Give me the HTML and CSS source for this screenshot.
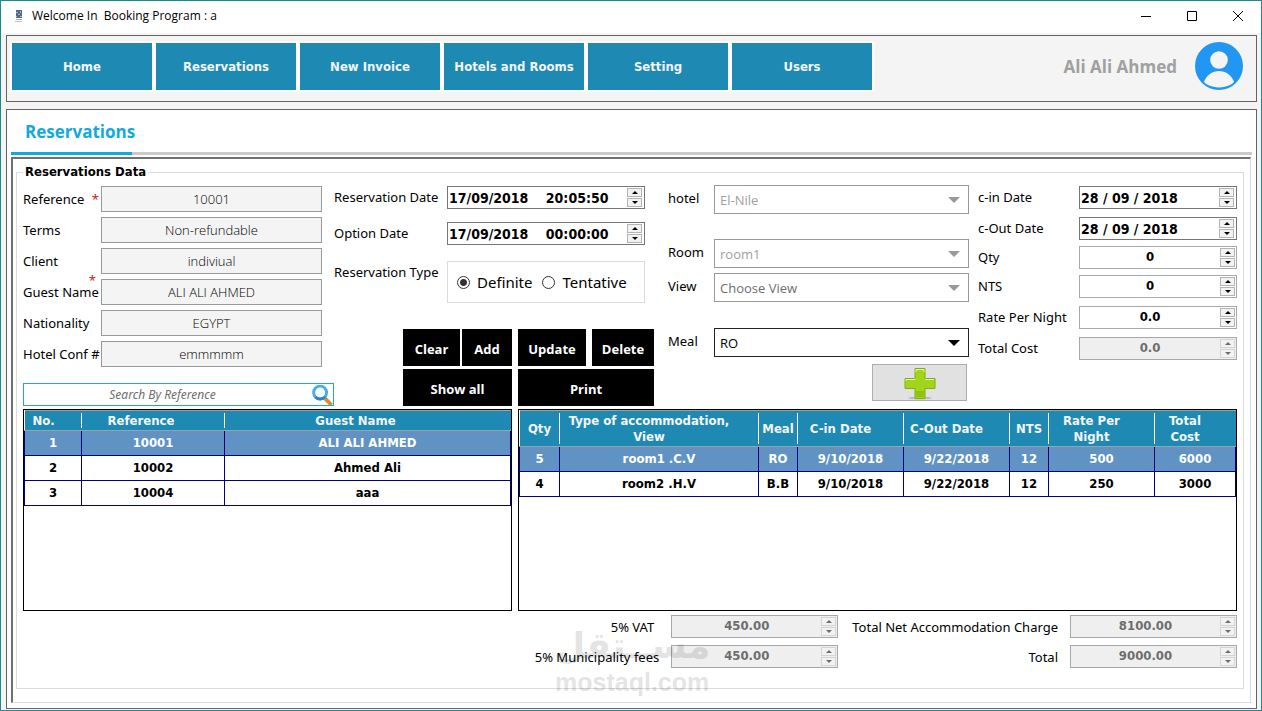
FILE: index.html
```html
<!DOCTYPE html>
<html lang="en">
<head>
<meta charset="utf-8">
<title>Welcome In Booking Program : a</title>
<link rel="stylesheet" href="styles.css">
</head>
<body>
<div class="window">
  <header class="titlebar">
    <svg class="app-icon" viewBox="0 0 8 14" aria-hidden="true"><path d="M1 1h6v8H1z" fill="#56668c"/><path d="M1 3h2v1H1zM5 2h1v2H5zM3 5h2v1H3zM1 7h1v1H1zM5 7h2v1H5z" fill="#aab4cc"/><path d="M1 10h6v1H1z" fill="#aaa"/><path d="M0 12h7v1H0z" fill="#cbb"/></svg>
    <span class="title">Welcome In&nbsp; Booking Program : a</span>
    <div class="window-controls">
      <button type="button" aria-label="Minimize"><svg viewBox="0 0 12 12"><path d="M1 6.500h10"/></svg></button>
      <button type="button" aria-label="Maximize"><svg viewBox="0 0 12 12"><path d="M1.500 1.500h9v9h-9z"/></svg></button>
      <button type="button" aria-label="Close"><svg viewBox="0 0 12 12"><path d="M1 1l10 10M11 1L1 11"/></svg></button>
    </div>
  </header>

  <div class="topbar">
    <nav class="nav">
      <button type="button">Home</button>
      <button type="button">Reservations</button>
      <button type="button">New Invoice</button>
      <button type="button">Hotels and Rooms</button>
      <button type="button">Setting</button>
      <button type="button">Users</button>
    </nav>
    <div class="user">
      <span>Ali Ali Ahmed</span>
      <svg viewBox="0 0 48 48" aria-hidden="true"><circle cx="24" cy="24" r="24" fill="#2196f3"/><circle cx="24" cy="18" r="8.800" fill="#f4f4f4"/><path d="M9 39.500C12 33 17.500 29 24 29s12 4 15 10.500c0 2-7 5.900-15 5.900S9 41.500 9 39.500z" fill="#f4f4f4"/></svg>
    </div>
  </div>

  <main class="page">
    <div class="tabs"><h1>Reservations</h1></div>
    <div class="sheet">
      <fieldset class="data">
        <legend>Reservations Data</legend>

        <div class="form">
          <div class="guest">
            <div class="field"><label for="ref">Reference<span class="star">*</span></label><input id="ref" value="10001" readonly></div>
            <div class="field"><label for="terms">Terms</label><input id="terms" value="Non-refundable" readonly></div>
            <div class="field"><label for="client">Client</label><input id="client" value="indiviual" readonly></div>
            <div class="field"><label for="guest">Guest Name<span class="star raised">*</span></label><input id="guest" value="ALI ALI AHMED" readonly></div>
            <div class="field"><label for="nat">Nationality</label><input id="nat" value="EGYPT" readonly></div>
            <div class="field"><label for="conf">Hotel Conf #</label><input id="conf" value="emmmmm" readonly></div>
            <div class="search">
              <input placeholder="Search By Reference" aria-label="Search By Reference">
              <svg viewBox="0 0 22 22" aria-hidden="true"><path d="M14 15l7 7" stroke="#dc8a2c" stroke-width="4"/><circle cx="9" cy="9" r="6.800" fill="#f4f9fd" stroke="#43aee8" stroke-width="3"/><path d="M4 13.500a6.800 6.800 0 0 0 10 0" fill="none" stroke="#2f7fcb" stroke-width="3"/></svg>
            </div>
          </div>

          <div class="booking">
            <div class="date-row"><label for="rdate">Reservation Date</label><div class="spin dark"><input id="rdate" value="17/09/2018    20:05:50"><span class="arrows"><button type="button" aria-label="Up"></button><button type="button" aria-label="Down"></button></span></div></div>
            <div class="date-row"><label for="odate">Option Date</label><div class="spin dark"><input id="odate" value="17/09/2018    00:00:00"><span class="arrows"><button type="button" aria-label="Up"></button><button type="button" aria-label="Down"></button></span></div></div>
            <div class="type-row">
              <span id="rtype">Reservation Type</span>
              <div class="radios" role="radiogroup" aria-labelledby="rtype">
                <label><input type="radio" name="rtype" checked>Definite</label>
                <label><input type="radio" name="rtype">Tentative</label>
              </div>
            </div>
            <div class="actions">
              <div class="pair edit">
                <button type="button">Clear</button><button type="button">Add</button>
                <button type="button" class="wide">Show all</button>
              </div>
              <div class="pair save">
                <button type="button">Update</button><button type="button">Delete</button>
                <button type="button" class="wide">Print</button>
              </div>
            </div>
          </div>

          <div class="stay">
            <div class="pick hotel"><label for="hotel">hotel</label><div class="combo"><select id="hotel" disabled><option>El-Nile</option></select></div></div>
            <div class="pick"><label for="room">Room</label><div class="combo"><select id="room" disabled><option>room1</option></select></div></div>
            <div class="pick view"><label for="view">View</label><div class="combo muted"><select id="view"><option>Choose View</option></select></div></div>
            <div class="pick"><label for="meal">Meal</label><div class="combo active"><select id="meal"><option>RO</option></select></div></div>
            <button type="button" class="plus" aria-label="Add room"><svg viewBox="0 0 34 34"><ellipse cx="17" cy="32" rx="12" ry="1.500" fill="#b9b9b9"/><path d="M12 2.500h10v10h10v10H22v10H12v-10H2v-10h10z" fill="#a2d41c" stroke="#7fb010"/><path d="M13 6V3.500h8V6M3 15v-1.500h9.500M22 13.500h9" fill="none" stroke="#e6f8a8"/><path d="M13 25h8v6h-8z" fill="#8fc216"/></svg></button>
          </div>

          <div class="rates">
            <div class="rate"><label for="cin">c-in Date</label><div class="spin dark"><input id="cin" value="28 / 09 / 2018"><span class="arrows"><button type="button" aria-label="Up"></button><button type="button" aria-label="Down"></button></span></div></div>
            <div class="rate"><label for="cout">c-Out Date</label><div class="spin dark"><input id="cout" value="28 / 09 / 2018"><span class="arrows"><button type="button" aria-label="Up"></button><button type="button" aria-label="Down"></button></span></div></div>
            <div class="rate"><label for="qty">Qty</label><div class="spin num"><input id="qty" value="0"><span class="arrows"><button type="button" aria-label="Up"></button><button type="button" aria-label="Down"></button></span></div></div>
            <div class="rate"><label for="nts">NTS</label><div class="spin num"><input id="nts" value="0"><span class="arrows"><button type="button" aria-label="Up"></button><button type="button" aria-label="Down"></button></span></div></div>
            <div class="rate"><label for="rpn">Rate Per Night</label><div class="spin num"><input id="rpn" value="0.0"><span class="arrows"><button type="button" aria-label="Up"></button><button type="button" aria-label="Down"></button></span></div></div>
            <div class="rate"><label for="cost">Total Cost</label><div class="spin num off"><input id="cost" value="0.0" disabled><span class="arrows"><button type="button" aria-label="Up" disabled></button><button type="button" aria-label="Down" disabled></button></span></div></div>
          </div>
        </div>

        <div class="grids">
          <div class="grid-box">
            <table class="guests">
              <colgroup><col class="c-no"><col class="c-ref"><col></colgroup>
              <thead><tr><th class="start">No.</th><th>Reference</th><th>Guest Name</th></tr></thead>
              <tbody>
                <tr class="selected"><td>1</td><td>10001</td><td>ALI ALI AHMED</td></tr>
                <tr><td>2</td><td>10002</td><td>Ahmed Ali</td></tr>
                <tr><td>3</td><td>10004</td><td>aaa</td></tr>
              </tbody>
            </table>
          </div>
          <div class="grid-box">
            <table class="rooms">
              <colgroup><col class="c-q"><col><col class="c-s"><col class="c-m"><col class="c-m"><col class="c-s"><col class="c-m"><col class="c-t"></colgroup>
              <thead><tr><th class="narrow">Qty</th><th>Type of accommodation, View</th><th class="narrow">Meal</th><th>C-in Date</th><th>C-Out Date</th><th class="narrow">NTS</th><th>Rate Per<br>Night</th><th>Total<br>Cost</th></tr></thead>
              <tbody>
                <tr class="selected"><td>5</td><td>room1 .C.V</td><td>RO</td><td>9/10/2018</td><td>9/22/2018</td><td>12</td><td>500</td><td>6000</td></tr>
                <tr><td>4</td><td>room2 .H.V</td><td>B.B</td><td>9/10/2018</td><td>9/22/2018</td><td>12</td><td>250</td><td>3000</td></tr>
              </tbody>
            </table>
          </div>
        </div>

        <div class="totals">
          <label for="vat" class="short">5% VAT</label><div class="spin num off"><input id="vat" value="450.00" disabled><span class="arrows"><button type="button" aria-label="Up" disabled></button><button type="button" aria-label="Down" disabled></button></span></div>
          <label for="net">Total Net Accommodation Charge</label><div class="spin num off"><input id="net" value="8100.00" disabled><span class="arrows"><button type="button" aria-label="Up" disabled></button><button type="button" aria-label="Down" disabled></button></span></div>
          <label for="fees">5% Municipality fees</label><div class="spin num off"><input id="fees" value="450.00" disabled><span class="arrows"><button type="button" aria-label="Up" disabled></button><button type="button" aria-label="Down" disabled></button></span></div>
          <label for="total">Total</label><div class="spin num off"><input id="total" value="9000.00" disabled><span class="arrows"><button type="button" aria-label="Up" disabled></button><button type="button" aria-label="Down" disabled></button></span></div>
          <div class="watermark"><span class="wm-ar" lang="ar" dir="rtl">مســتقل</span><span class="wm-en">mostaql.com</span></div>
        </div>
      </fieldset>
    </div>
  </main>
</div>
</body>
</html>
```
FILE: styles.css
```css
* { box-sizing: border-box; }
body {
  margin: 0;
  font-family: "Noto Sans", "Open Sans", sans-serif;
  font-size: 13px;
  color: #000;
}
button, input, select { font: inherit; color: inherit; margin: 0; }
button { padding: 0; border: 0; border-radius: 0; }

.window {
  display: flex;
  flex-direction: column;
  min-height: 100vh;
  padding-bottom: 1px;
  border: 1px solid #1c8a8c;
  background: #f4f4f4;
}

.titlebar {
  display: flex;
  align-items: center;
  height: 32px;
  padding: 0 0 3px 14px;
  background: #fff;
}
.app-icon { width: 8px; height: 14px; }
.title { margin-left: 9px; font-family: "Open Sans", sans-serif; font-size: 12px; }
.window-controls { display: flex; margin-left: auto; }
.window-controls button { display: grid; place-items: center; width: 46px; height: 28px; background: none; }
.window-controls svg { width: 12px; height: 12px; fill: none; stroke: #000; }

.topbar {
  display: flex;
  justify-content: space-between;
  align-items: flex-start;
  margin: 2px 4px 0 5px;
  padding: 5px 13px 9px 3px;
  border: 1px solid #646464;
}
.nav { display: flex; gap: 4px; padding: 2px; background: #fff; }
.nav button {
  width: 140px;
  height: 47px;
  background: #1e8ab4;
  color: #f4f4f4;
  font-family: "DejaVu Sans Condensed", "Noto Sans", sans-serif;
  font-size: 13px;
  font-weight: 700;
}
.user { display: flex; align-items: center; gap: 18px; padding-top: 1px; color: #a0a0a0; font-family: "Open Sans", sans-serif; font-size: 17px; font-weight: 700; }
.user svg { width: 48px; height: 48px; }

.page {
  flex: 1;
  display: flex;
  flex-direction: column;
  margin: 7px 4px 0 5px;
  padding: 0 4px 5px;
  border: 1px solid #646464;
  background: #fff;
}
.tabs { height: 45px; border-bottom: 3px solid #cacaca; }
.tabs h1 {
  width: 121px;
  height: 45px;
  margin: 0;
  padding-left: 14px;
  border-bottom: 3px solid #12aadc;
  color: #12aadc;
  font-family: "Open Sans", sans-serif;
  font-size: 17px;
  font-weight: 700;
  line-height: 44px;
}
.sheet {
  flex: 1;
  display: flex;
  margin: 2px 1px 0 0;
  padding: 5px 6px 13px 3px;
  border: 1px solid #dcdcdc;
  border-width: 2px 1px 1px 2px;
  border-color: #707070 #dcdcdc #dcdcdc #707070;
}
.data {
  flex: 1;
  display: flex;
  flex-direction: column;
  min-width: 0;
  margin: 0;
  padding: 6px 6px 20px;
  border: 1px solid #dcdcdc;
}
.data legend {
  padding: 0 2px;
  font-family: "DejaVu Sans Condensed", "Noto Sans", sans-serif;
  font-size: 13px;
  font-weight: 700;
  line-height: 16px;
}

.form { display: grid; grid-template-columns: 311fr 320fr 315fr 268fr; }

.guest { display: flex; flex-direction: column; gap: 5px; }
.field { display: flex; align-items: center; padding-right: 12px; }
.field label { position: relative; display: flex; width: 78px; white-space: nowrap; }
.field input {
  flex: 1;
  min-width: 0;
  height: 26px;
  padding: 0;
  border: 1px solid #999;
  background: #f4f4f4;
  font-family: "Open Sans", sans-serif;
  font-size: 13px;
  font-weight: 300;
  text-align: center;
}
.star { margin: 0 2px 0 auto; color: #c82020; }
.star.raised { position: absolute; top: -12px; right: 3px; }
.search { display: flex; align-items: center; height: 23px; margin-top: 11px; border: 1px solid #2aa4cc; }
.search input {
  flex: 1;
  min-width: 0;
  height: 21px;
  padding: 0 10px 0 0;
  border: 0;
  background: none;
  font-size: 12px;
  font-style: italic;
  text-align: center;
}
.search input::placeholder { color: #6e6e6e; }
.search svg { width: 22px; height: 21px; }

.booking { display: flex; flex-direction: column; }
.date-row { display: flex; align-items: flex-start; margin-bottom: 13px; padding-right: 9px; }
.date-row label, .type-row > span { flex: 1; line-height: 23px; white-space: nowrap; }
.date-row .spin, .radios { width: 198px; }
.type-row { display: flex; margin-top: 3px; padding-right: 9px; }
.radios { display: flex; align-items: center; gap: 10px; height: 42px; padding-left: 9px; border: 1px solid #dcdcdc; font-size: 15px; }
.radios label { display: flex; align-items: center; gap: 7px; }
.radios input {
  appearance: none;
  width: 13px;
  height: 13px;
  border: 1px solid #333;
  border-radius: 50%;
  background: #fff;
}
.radios input:checked { background: radial-gradient(circle, #333 0 3px, #fff 4px); }
.actions { display: flex; justify-content: flex-end; gap: 6px; margin-top: auto; }
.pair { display: grid; row-gap: 3px; }
.edit { grid-template-columns: 57px 50px; column-gap: 2px; }
.save { grid-template-columns: 68px 62px; column-gap: 6px; }
.pair button { height: 37px; padding-top: 3px; background: #000; color: #fff; font-family: "Open Sans", sans-serif; font-size: 13px; font-weight: 700; }
.pair .wide { grid-column: 1 / -1; }

.stay { display: flex; flex-direction: column; padding-left: 14px; margin-top: -1px; }
.pick { display: flex; }
.pick label { width: 46px; line-height: 27px; }
.pick.hotel { margin-bottom: 25px; }
.pick.view { margin: 5px 0 26px; }
.combo { position: relative; flex: 1; height: 29px; border: 1px solid #999; color: #a0a0a0; }
.combo select { appearance: none; width: 100%; height: 27px; padding: 2px 5px; border: 0; background: #fff; font-family: "Open Sans", sans-serif; font-size: 13px; opacity: 1; }
.combo::after {
  content: "";
  position: absolute;
  top: 11px;
  right: 8px;
  border: 6px solid transparent;
  border-top-color: #999;
  border-bottom: 0;
  pointer-events: none;
}
.combo.muted { color: #6e6e6e; }
.combo.active { border-color: #222; color: #000; }
.combo.active::after { border-top-color: #000; }
.plus { align-self: flex-end; display: grid; place-items: center; width: 95px; height: 37px; margin: 7px 2px 0 0; border: 1px solid #adadad; background: #e1e1e1; }
.plus svg { width: 34px; height: 34px; }

.rates { display: flex; flex-direction: column; gap: 8px; padding-left: 9px; }
.rate { display: flex; align-items: center; }
.rate label { flex: 1; line-height: 23px; white-space: nowrap; }
.rate .spin { width: 158px; }
.rate:nth-child(3), .rate:nth-child(4) { margin-top: -2px; }

.spin { display: flex; align-items: center; height: 23px; padding-right: 2px; border: 1px solid #a8a8ac; background: #fff; }
.spin.dark { border-color: #767676; }
.spin input {
  flex: 1;
  min-width: 0;
  height: 21px;
  padding: 0 1px;
  border: 0;
  background: none;
  font-family: "DejaVu Sans Condensed", "Noto Sans", sans-serif;
  font-size: 14px;
  font-weight: 700;
}
.spin.num { padding-right: 1px; }
.num input { padding: 0 0 2px; font-size: 13px; text-align: center; }
.arrows { display: flex; flex-direction: column; gap: 1px; }
.arrows button {
  display: grid;
  place-items: center;
  width: 15px;
  height: 9px;
  border: 1px solid #b4b4b4;
  background: #f2f2f2;
}
.arrows button::before { content: ""; border: 3px solid transparent; border-bottom-color: #000; border-top: 0; }
.arrows button:last-child::before { border: 3px solid transparent; border-top-color: #000; border-bottom: 0; }
.spin.off { background: #efefef; color: #6d6d6d; }
.off .arrows button { border-color: #d4d4d4; }
.off .arrows button::before { border-bottom-color: #6d6d6d; }
.off .arrows button:last-child::before { border-bottom-color: transparent; border-top-color: #6d6d6d; }

.grids { flex: 1; display: grid; grid-template-columns: 489fr 719fr; gap: 6px; margin-top: 3px; }
.grid-box { border: 1px solid #000; }
table {
  width: 100%;
  table-layout: fixed;
  border-collapse: collapse;
  font-family: "DejaVu Sans Condensed", "Noto Sans", sans-serif;
  font-size: 13px;
  font-weight: 700;
  line-height: 16px;
  text-align: center;
}
.c-no { width: 57px; }
.c-ref { width: 143px; }
.c-q { width: 40px; }
.c-s { width: 39px; }
.c-m { width: 106px; }
.c-t { width: 81px; }
th {
  height: 20px;
  padding: 0 24px 0 0;
  border-top: 1px solid #a0a0a0;
  border-bottom: 1px solid #a0a0a0;
  background: linear-gradient(#fff, #fff) right center / 1px calc(100% - 4px) no-repeat #1e8ab4;
  color: #f4f4f4;
}
th:last-child { background: #1e8ab4; }
th.start { padding: 0 8px; text-align: left; }
.rooms th { height: 36px; padding: 0 20px 0 0; }
.rooms th.narrow { padding: 0; }
td { height: 25px; padding: 0; border: 1px solid #000080; border-top-width: 0; }
.selected td { background: #6093c4; color: #fff; }

.totals {
  position: relative;
  display: grid;
  grid-template-columns: max-content 167px max-content 167px;
  justify-content: end;
  align-items: center;
  row-gap: 7px;
  margin-top: 4px;
}
.totals label { margin: 0 12px 0 14px; text-align: right; }
.totals .short { margin-right: 17px; }
.watermark {
  position: absolute;
  top: 8px;
  left: 531px;
  display: flex;
  flex-direction: column;
  align-items: center;
  color: #000;
  opacity: 0.1;
  font-weight: 700;
  pointer-events: none;
}
.wm-ar { font-family: "DejaVu Sans", sans-serif; font-size: 36px; line-height: 46px; }
.wm-en { font-family: "Liberation Sans", sans-serif; font-size: 25px; line-height: 26px; }
```
